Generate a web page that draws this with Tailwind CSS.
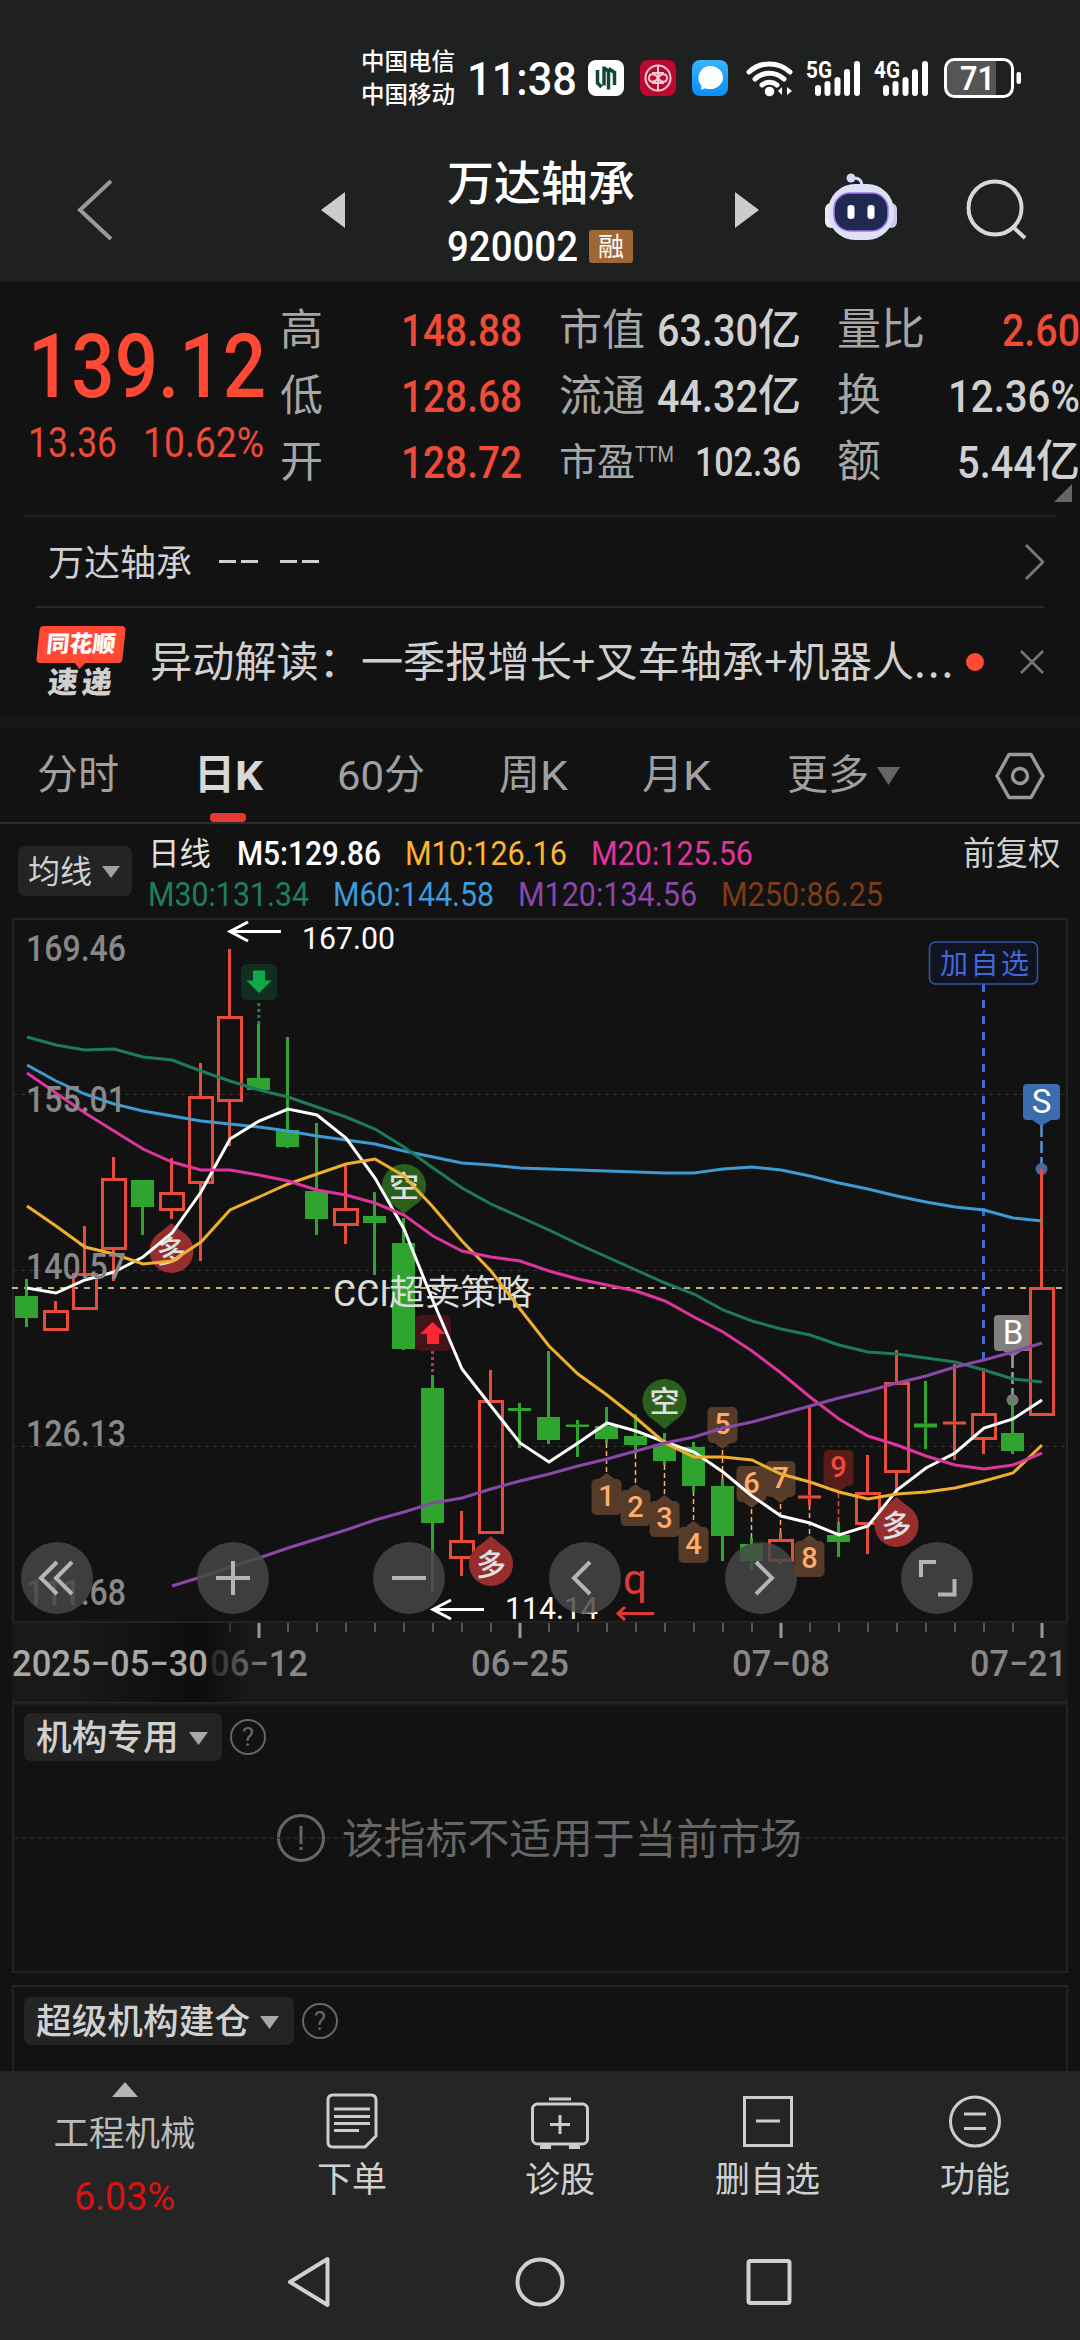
<!DOCTYPE html>
<html lang="zh-CN">
<head>
    <meta charset="UTF-8">
    <meta name="viewport" content="width=device-width, initial-scale=1.0">
    <title>万达轴承 920002</title>
    <script src="https://cdn.jsdelivr.net/npm/@tailwindcss/browser@4"></script>
</head>
<body class="w-[1080px] h-[2340px] overflow-hidden bg-[#121212] text-[#d0d0d0] font-['Roboto','Noto_Sans_CJK_SC',sans-serif] leading-none whitespace-nowrap">

    <!-- Header -->
    <header class="h-[282px] bg-[#1f2120]">
        <!-- Status bar -->
        <div class="h-[156px] flex items-center pl-[361px] text-white">
            <div class="w-[106px] text-[23.5px] font-medium flex flex-col gap-[10px] pt-[2px]">
                <span>中国电信</span>
                <span>中国移动</span>
            </div>
            <span data-w="110" class="text-[47px] font-medium">11:38</span>
            <svg class="ml-[11px]" width="36" height="36" viewBox="0 0 36 36">
                <rect width="36" height="36" rx="8" fill="#fff"/>
                <path d="M9.500 10v13l4 4M16 6.500v19M20.500 9.500v20M20.500 8.500l6 4V25M16 8l4.500 3" fill="none" stroke="#12482f" stroke-width="3.500"/>
            </svg>
            <svg class="ml-4" width="36" height="36" viewBox="0 0 36 36">
                <rect width="36" height="36" rx="8" fill="#bd0831"/>
                <g fill="none" stroke="#f3cdd5" stroke-width="2"><circle cx="18" cy="18" r="12.5"/><path d="M18 5v26M18 18c-3-5-9-5-9 0s6 5 9 0 9-5 9 0-6 5-9 0M12 13h12M12 23h12"/></g>
            </svg>
            <svg class="ml-4" width="36" height="36" viewBox="0 0 36 36">
                <defs><linearGradient id="msg" x2="0" y2="1"><stop stop-color="#38b4fb"/><stop offset="1" stop-color="#0a8df8"/></linearGradient></defs>
                <rect width="36" height="36" rx="8" fill="url(#msg)"/>
                <path d="M18 6a13 11.5 0 0 1 0 23c-2 0-3 0-5-.8L9 30l.6-4A12 12 0 0 1 18 6z" fill="#fff"/>
            </svg>
            <svg class="ml-[18px]" width="48" height="38" viewBox="0 0 48 38">
                <g fill="none" stroke="#fff" stroke-width="5" stroke-linecap="round"><path d="M3 13a30 30 0 0 1 41 0M9 20a21 21 0 0 1 29 0M16 26a12 12 0 0 1 15 0"/></g>
                <circle cx="23.500" cy="32.500" r="4.800" fill="#fff"/>
                <path d="M36 28v8l-4-4zM41 28v8l5-4z" fill="#fff"/>
            </svg>
            <svg class="ml-[12px]" width="56" height="38" viewBox="0 0 56 38">
                <text x="0" y="19" font-size="24" font-weight="700" fill="#fff" textLength="26" lengthAdjust="spacingAndGlyphs">5G</text>
                <g stroke="#fff" stroke-width="6" stroke-linecap="round"><path d="M12 29v5M21.500 25v9M31.500 21v13M41 13v21M51 5v29"/></g>
            </svg>
            <svg class="ml-[12px]" width="56" height="38" viewBox="0 0 56 38">
                <text x="0" y="19" font-size="24" font-weight="700" fill="#fff" textLength="26" lengthAdjust="spacingAndGlyphs">4G</text>
                <g stroke="#fff" stroke-width="6" stroke-linecap="round"><path d="M12 29v5M21.500 25v9M31.500 21v13M41 13v21M51 5v29"/></g>
            </svg>
            <svg class="ml-[12px]" width="80" height="42" viewBox="0 0 80 42">
                <path d="M12 4h42v34H12q-8 0-8-8V12q0-8 8-8z" fill="#555"/>
                <rect x="3.500" y="2.500" width="67" height="37" rx="9" fill="none" stroke="#fff" stroke-width="3"/>
                <rect x="74.500" y="15" width="4.500" height="12" rx="2" fill="#fff"/>
                <text x="18" y="33" font-size="34" font-weight="600" fill="#fff" textLength="35" lengthAdjust="spacingAndGlyphs">71</text>
            </svg>
        </div>
        <!-- Stock title -->
        <div class="h-[108px] flex items-center pl-[74px]">
            <svg width="42" height="64" viewBox="0 0 42 64"><path d="M37 3L6 32l31 29" fill="none" stroke="#999" stroke-width="4"/></svg>
            <svg class="ml-[205px]" width="24" height="36" viewBox="0 0 24 36"><path d="M24 0v36L0 18z" fill="#ccc"/></svg>
            <div class="ml-[102px] w-[186px] self-start text-white">
                <div class="h-[52px] flex items-center text-[47px] font-medium pt-[2px]">万达轴承</div>
                <div class="h-[76px] flex items-center justify-between">
                    <span data-w="131" class="text-[42px] font-medium">920002</span>
                    <span class="w-[44px] h-[33px] rounded-[3px] bg-[#a06634] flex items-center justify-center text-[26px] pt-[2px]">融</span>
                </div>
            </div>
            <svg class="ml-[102px]" width="24" height="36" viewBox="0 0 24 36"><path d="M0 0v36l24-18z" fill="#ccc"/></svg>
            <svg class="ml-[65px] -mt-1.5" width="74" height="68" viewBox="0 0 74 68">
                <path d="M27 6q11-3 11 8" fill="none" stroke="#dcdcf4" stroke-width="3"/>
                <circle cx="27" cy="5" r="4.500" fill="#d6d6f5"/>
                <rect x="1" y="30" width="12" height="25" rx="6" fill="#e9e9fb"/>
                <rect x="61" y="30" width="12" height="25" rx="6" fill="#c9c9f0"/>
                <rect x="4" y="11" width="66" height="56" rx="27" fill="#dfdff5"/>
                <rect x="10" y="20" width="54" height="38" rx="16" fill="#202950" stroke="#9c7bf0" stroke-width="1.500"/>
                <rect x="23.500" y="32" width="7" height="14" rx="3" fill="#fff"/>
                <rect x="43.500" y="32" width="7" height="14" rx="3" fill="#fff"/>
            </svg>
            <svg class="ml-[67px]" width="64" height="64" viewBox="0 0 64 64"><g fill="none" stroke="#d8d8d8" stroke-width="4"><circle cx="30" cy="30" r="26.500"/><path d="M48 49l12 11"/></g></svg>
        </div>
    </header>

    <!-- Quote -->
    <section class="relative mx-6 h-[235px] pt-[15px] border-b-2 border-[#232323] flex text-[43px] text-[#a6a6a6]">
        <div class="w-[256px] shrink-0 pl-1 text-[#ff4935]">
            <div class="h-[136px] flex items-center"><span data-w="238" class="text-[89px] font-medium">139.12</span></div>
            <div class="h-[18px] flex items-center justify-between pr-[16px] text-[42px] text-[#f04a38]"><span data-w="89">13.36</span><span data-w="121">10.62%</span></div>
        </div>
        <div class="w-[242px] shrink-0 h-[198px] grid grid-rows-3 items-center">
            <div class="flex justify-between items-center">高<span data-w="121" class="text-[44px] font-medium text-[#f04a38]">148.88</span></div>
            <div class="flex justify-between items-center">低<span data-w="121" class="text-[44px] font-medium text-[#f04a38]">128.68</span></div>
            <div class="flex justify-between items-center">开<span data-w="121" class="text-[44px] font-medium text-[#f04a38]">128.72</span></div>
        </div>
        <div class="ml-[37px] w-[242px] shrink-0 h-[198px] grid grid-rows-3 items-center">
            <div class="flex justify-between items-center">市值<span class="text-[#d0d0d0] font-medium flex items-center"><span data-w="101" class="text-[44px]">63.30</span>亿</span></div>
            <div class="flex justify-between items-center">流通<span class="text-[#d0d0d0] font-medium flex items-center"><span data-w="101" class="text-[44px]">44.32</span>亿</span></div>
            <div class="flex items-center text-[38px]">市盈<span data-w="39" class="text-[22px] mb-4">TTM</span><span data-w="106" class="ml-auto text-[40px] font-medium text-[#d0d0d0]">102.36</span></div>
        </div>
        <div class="ml-[36px] w-[243px] shrink-0 h-[198px] grid grid-rows-3 items-center text-[44px]">
            <div class="flex justify-between items-center">量比<span data-w="78" class="font-medium text-[#f04a38]">2.60</span></div>
            <div class="flex justify-between items-center">换<span data-w="132" class="font-medium text-[#d0d0d0]">12.36%</span></div>
            <div class="flex justify-between items-center">额<span class="text-[#d0d0d0] font-medium flex items-center"><span data-w="79">5.44</span>亿</span></div>
        </div>
        <svg class="absolute left-[1030px] top-[202px]" width="18" height="18" viewBox="0 0 18 18"><path d="M18 0v18H0z" fill="#666"/></svg>
    </section>

    <!-- Name row -->
    <section class="mx-9 h-[91px] border-b-2 border-[#2a2a2a] flex items-center">
        <span class="ml-[12px] pt-[4px] text-[36px]">万达轴承</span>
        <div class="ml-[27px] flex gap-[5px]">
            <i class="w-[17px] h-[3px] bg-[#d0d0d0]"></i><i class="w-[17px] h-[3px] bg-[#d0d0d0]"></i>
            <i class="ml-[17px] w-[17px] h-[3px] bg-[#d0d0d0]"></i><i class="w-[17px] h-[3px] bg-[#d0d0d0]"></i>
        </div>
        <svg class="ml-auto" width="20" height="38" viewBox="0 0 20 38"><path d="M2 2l17 17L2 36" fill="none" stroke="#777" stroke-width="3"/></svg>
    </section>

    <!-- News row -->
    <section class="mx-9 h-[107px] flex items-center">
        <div class="w-[90px]">
            <div class="relative w-[86px] h-[37px] ml-[2px] rounded-[4px] -skew-x-6 bg-[#ff4935] flex items-center justify-center text-[23px] font-black text-white">同花顺
                <svg class="absolute left-[38px] top-[36px]" width="12" height="7" viewBox="0 0 12 7"><path d="M0 0h12L6 7z" fill="#ff4935"/></svg>
            </div>
            <div class="mt-[5px] pl-[12px] flex gap-[4px] text-[30px] font-black -skew-x-6"><span>速</span><span>递</span></div>
        </div>
        <span class="ml-[24px] mb-[5px] text-[42.2px] font-['Noto_Sans_CJK_SC',sans-serif]">异动解读：一季报增长+叉车轴承+机器人<span class="tracking-[2px]">...</span></span>
        <i class="ml-auto size-[18px] rounded-full bg-[#ff4935]"></i>
        <svg class="ml-[36px]" width="24" height="24" viewBox="0 0 24 24"><path d="M1 1l22 22M23 1L1 23" fill="none" stroke="#777" stroke-width="2.500"/></svg>
    </section>

    <div class="h-3 bg-[#171717]"></div>

    <!-- Period tabs -->
    <nav class="h-[97px] border-b-2 border-[#2c2c2c] pl-[37px] pt-[2px] flex items-center text-[41px] text-[#a0a0a0]">
        <span class="w-[157px]">分时</span>
        <span class="relative w-[143px] font-bold text-[#d8d8d8] flex items-center">日<span data-w="28">K</span>
            <i class="absolute left-[16px] top-[58px] w-[36px] h-[9px] rounded-[4px] bg-[#e53935]"></i>
        </span>
        <span class="w-[162px] flex items-center"><span data-w="47">60</span>分</span>
        <span class="w-[143px] flex items-center">周<span data-w="28">K</span></span>
        <span class="w-[145px] flex items-center">月<span data-w="28">K</span></span>
        <span>更多</span>
        <svg class="ml-[8px]" width="23" height="18" viewBox="0 0 23 18"><path d="M0 0h23L11.500 18z" fill="#666"/></svg>
        <svg class="ml-[95px]" width="50" height="48" viewBox="0 0 50 48"><g fill="none" stroke="#999" stroke-width="3.500" stroke-linejoin="round"><path d="M14 2.500h22L48 24 36 45.500H14L2 24z"/><circle cx="25" cy="24" r="7.500"/></g></svg>
    </nav>

    <!-- Moving averages -->
    <section class="h-[86px] pl-[18px] pt-[9px] flex">
        <div class="mt-[13px] w-[114px] h-[50px] rounded-[7px] bg-[#242424] flex items-center pl-[10px] pt-[2px] text-[32px]">均线<svg class="ml-[10px]" width="18" height="12" viewBox="0 0 18 12"><path d="M0 0h18L9 12z" fill="#a0a0a0"/></svg></div>
        <div class="ml-4 w-[815px] text-[33px]">
            <div class="h-[41px] flex items-center">
                <span class="w-[89px] pt-[2px] text-[31.5px] text-[#e0e0e0]">日线</span>
                <span data-w="144" class="font-medium text-white">M5:129.86</span>
                <span data-w="162" class="ml-6 text-[#fdb52b]">M10:126.16</span>
                <span data-w="162" class="ml-6 text-[#e0359f]">M20:125.56</span>
            </div>
            <div class="h-[41px] flex items-center">
                <span data-w="161" class="text-[#1d7f5f]">M30:131.34</span>
                <span data-w="161" class="ml-6 text-[#3c9bdc]">M60:144.58</span>
                <span data-w="179" class="ml-6 text-[#8b47ac]">M120:134.56</span>
                <span data-w="162" class="ml-6 text-[#7d3c14]">M250:86.25</span>
            </div>
        </div>
        <div class="h-[41px] flex items-center pt-[2px] text-[32.5px]">前复权</div>
    </section>

    <!-- K line chart -->
    <svg id="chart" class="block" width="1080" height="796" viewBox="0 910 1080 796">
        <defs>
            <linearGradient id="fade"><stop stop-color="#0e0e0e" stop-opacity="0"/><stop offset=".65" stop-color="#0e0e0e"/><stop offset=".75" stop-color="#0e0e0e"/><stop offset="1" stop-color="#0e0e0e" stop-opacity="0"/></linearGradient>
            <linearGradient id="dateFade" gradientUnits="userSpaceOnUse" x1="208" x2="270"><stop stop-color="#222"/><stop offset="1" stop-color="#888"/></linearGradient>
        </defs>
        <rect x="12" y="1622" width="1056" height="84" fill="#191919"/>
        <rect x="13" y="919" width="1054" height="703" fill="none" stroke="#232323" stroke-width="2"/>
        <path d="M12 1702.500h1056" stroke="#272727" stroke-width="2"/>
        <g stroke="#333" stroke-dasharray="4 4"><path d="M13 1094.500h1054M13 1270.500h1054M13 1446.500h1054"/></g>
        <path d="M12 1288h1050" stroke="#c9ae86" stroke-width="2" stroke-dasharray="6 6"/>
        <path d="M983.500 984V1372" stroke="#4169d9" stroke-width="3" stroke-dasharray="8 8"/>

        <!-- S / B points -->
        <g text-anchor="middle" font-size="33" fill="#fff">
            <rect x="1023" y="1084" width="37" height="36" rx="4" fill="#3a6cae"/>
            <path d="M1032 1120h19l-9.500 6z" fill="#3a6cae"/>
            <path d="M1041.500 1125v42" stroke="#5a92d0" stroke-width="2.500" stroke-dasharray="12 4"/>
            <circle cx="1041.500" cy="1169" r="6" fill="#45699f"/>
            <text x="1041.500" y="1113">S</text>
            <rect x="994" y="1315" width="37" height="36" rx="4" fill="#808080"/>
            <path d="M1003 1351h19l-9.500 6z" fill="#808080"/>
            <path d="M1012.500 1356v42" stroke="#a0a0a0" stroke-width="2.500" stroke-dasharray="12 4"/>
            <circle cx="1012.500" cy="1400" r="6" fill="#777"/>
            <text x="1013" y="1344">B</text>
        </g>

        <g id="candles"></g>
        <g id="marks"></g>

        <!-- buy / sell arrows -->
        <rect x="241" y="964" width="36" height="36" rx="6" fill="#10301f"/>
        <path d="M253 970.500h12v10h6.500L259 993l-12.500-12.500h6.500z" fill="#0fa84a"/>
        <path d="M258.800 1003v21" stroke="#178a45" stroke-width="3" stroke-dasharray="3 3"/>
        <rect x="415" y="1315" width="36" height="36" rx="6" fill="#451418"/>
        <path d="M427 1344h12v-10h6.500L432.500 1322l-12.500 12h7z" fill="#ff2636"/>
        <path d="M432.500 1351v22" stroke="#c72d3a" stroke-width="3" stroke-dasharray="3 3"/>

        <text x="333" y="1306" font-size="37" fill="#dcdcdc" textLength="56" lengthAdjust="spacingAndGlyphs">CCI</text>
        <text x="389" y="1305" font-size="35.700" fill="#dcdcdc">超卖策略</text>

        <g id="lines" fill="none" stroke-width="3"></g>

        <g font-size="36" font-weight="500" fill="#888">
            <text x="26" y="961" textLength="100" lengthAdjust="spacingAndGlyphs">169.46</text>
            <text x="26" y="1112" textLength="100" lengthAdjust="spacingAndGlyphs">155.01</text>
            <text x="26" y="1278.500" textLength="100" lengthAdjust="spacingAndGlyphs">140.57</text>
            <text x="26" y="1446" textLength="100" lengthAdjust="spacingAndGlyphs">126.13</text>
            <text x="26" y="1605" textLength="100" lengthAdjust="spacingAndGlyphs">111.68</text>
        </g>
        <g fill="none" stroke="#fff" stroke-width="3"><path d="M281 931.500h-50M248 922l-18 9.500 18 9.500M484 1609.500h-50M451 1600l-18 9.500 18 9.500"/></g>
        <text x="302" y="949" font-size="32" fill="#fff" textLength="93" lengthAdjust="spacingAndGlyphs">167.00</text>
        <text x="505" y="1619" font-size="32" fill="#fff" textLength="93" lengthAdjust="spacingAndGlyphs">114.14</text>
        <text x="623" y="1594" font-size="42" fill="#e03a38">q</text>
        <path d="M654 1613.500h-35M625 1607l-7 6.500 7 6.500" fill="none" stroke="#e03a38" stroke-width="3"/>
        <rect x="929.500" y="942" width="108" height="42" rx="6" fill="#0f1420" stroke="#3556a8" stroke-width="1.500"/>
        <text x="940" y="973.500" font-size="28" fill="#4169d9" textLength="89">加自选</text>

        <!-- round tool buttons -->
        <g fill="#484848" fill-opacity=".84"><circle cx="57" cy="1578" r="36"/><circle cx="233" cy="1578" r="36"/><circle cx="409" cy="1578" r="36"/><circle cx="585" cy="1578" r="36"/><circle cx="761" cy="1578" r="36"/><circle cx="937" cy="1578" r="36"/></g>
        <g fill="none" stroke="#b5b5b5" stroke-width="4"><path d="M57 1562l-16 16 16 16M72 1562l-16 16 16 16M216 1578h34M233 1561v34M392 1578h34M590 1562l-16 16 16 16M756 1562l16 16-16 16M936 1562h-15v15M938 1594.500h16.500V1579"/></g>

        <!-- time axis -->
        <g id="ticks"></g>
        <rect x="70" y="1623" width="180" height="79" fill="url(#fade)"/>
        <g font-size="36" font-weight="500" fill="#888">
            <text x="12" y="1676" fill="#a8a8a8" textLength="196" lengthAdjust="spacingAndGlyphs">2025−05−30</text>
            <text x="210" y="1676" fill="url(#dateFade)" textLength="98" lengthAdjust="spacingAndGlyphs">06−12</text>
            <text x="471" y="1676" textLength="98" lengthAdjust="spacingAndGlyphs">06−25</text>
            <text x="732" y="1676" textLength="98" lengthAdjust="spacingAndGlyphs">07−08</text>
            <text x="970" y="1676" textLength="97" lengthAdjust="spacingAndGlyphs">07−21</text>
        </g>
    </svg>

    <!-- Indicator panel 1 -->
    <section class="mx-3 h-[267px] border-x-2 border-b-2 border-[#232323] pt-[7px]">
        <div class="h-[48px] pl-[10px] flex items-center">
            <div class="w-[198px] h-[48px] rounded-[7px] bg-[#242424] flex items-center pl-3 pt-[3px] text-[35.7px] font-medium">机构专用<svg class="ml-[10px]" width="19" height="13" viewBox="0 0 19 13"><path d="M0 0h19L9.500 13z" fill="#a8a8a8"/></svg></div>
            <div class="ml-[8px] size-[36px] rounded-full border-[2.5px] border-[#666] flex items-center justify-center text-[26px] text-[#666]">?</div>
        </div>
        <div class="relative mt-[52px] h-[50px] flex items-center pl-[263px] text-[41.8px] text-[#666]">
            <svg class="absolute left-0 top-[24px]" width="1052" height="2" viewBox="0 0 1052 2"><path d="M0 1h1052" stroke="#272727" stroke-width="1.500" stroke-dasharray="4 4"/></svg>
            <svg class="mr-[17px]" width="48" height="48" viewBox="0 0 48 48"><circle cx="24" cy="24" r="22.500" fill="none" stroke="#666" stroke-width="3"/><path d="M24 12v18M24 33v3" stroke="#666" stroke-width="3"/></svg>
            <span class="relative pt-[4px]">该指标不适用于当前市场</span>
        </div>
    </section>
    <!-- Indicator panel 2 -->
    <section class="mx-3 mt-3 h-[86px] border-x-2 border-t-2 border-[#232323] pt-[10px]">
        <div class="h-[48px] pl-[10px] flex items-center">
            <div class="w-[270px] h-[48px] rounded-[7px] bg-[#242424] flex items-center pl-3 pt-[3px] text-[35.7px] font-medium">超级机构建仓<svg class="ml-[10px]" width="19" height="13" viewBox="0 0 19 13"><path d="M0 0h19L9.500 13z" fill="#a8a8a8"/></svg></div>
            <div class="ml-[8px] size-[36px] rounded-full border-[2.5px] border-[#666] flex items-center justify-center text-[26px] text-[#666]">?</div>
        </div>
    </section>

    <!-- Bottom bar -->
    <footer class="h-[269px] bg-[#252525]">
        <div class="h-[140px] flex text-[35px]">
            <div class="w-[249px] pt-[11px] flex flex-col items-center text-[35.5px] text-[#bbb]">
                <svg class="shrink-0" width="26" height="15" viewBox="0 0 26 15"><path d="M13 0l13 15H0z" fill="#b5b5b5"/></svg>
                <span class="mt-[20px]">工程机械</span>
                <span data-w="101" class="mt-[24px] text-[38px] text-[#dd1210]">6.03%</span>
            </div>
            <div class="w-[206px] pt-[21px] flex flex-col items-center">
                <svg width="52" height="60" viewBox="0 0 52 60"><g fill="none" stroke="#ccc" stroke-width="3"><path d="M7 3h38q5 0 5 5v36L39 55H7q-5 0-5-5V8q0-5 5-5z"/><path d="M8 17h36M8 24.500h36M8 31.500h36M8 38.500h25"/></g></svg>
                <span class="mt-[11px]">下单</span>
            </div>
            <div class="w-[210px] pt-[21px] flex flex-col items-center">
                <svg width="60" height="60" viewBox="0 0 60 60"><g fill="none" stroke="#ccc" stroke-width="3"><rect x="2.500" y="12" width="55" height="40" rx="5"/><path d="M19 7h22M30 23v19M20 32.500h20"/><path d="M10 55h11M39 55h11" stroke-width="4"/></g></svg>
                <span class="mt-[11px]">诊股</span>
            </div>
            <div class="w-[205px] pt-[21px] flex flex-col items-center">
                <svg width="52" height="60" viewBox="0 0 52 60"><path d="M2.500 5.500h47v48h-47zM14 29h24" fill="none" stroke="#ccc" stroke-width="3"/></svg>
                <span class="mt-[11px]">删自选</span>
            </div>
            <div class="w-[210px] pt-[21px] flex flex-col items-center">
                <svg width="54" height="60" viewBox="0 0 54 60"><g fill="none" stroke="#ccc" stroke-width="3"><circle cx="27" cy="29.500" r="24.500"/><path d="M16 22h22M16 36.500h22"/></g></svg>
                <span class="mt-[11px]">功能</span>
            </div>
        </div>
        <!-- System navigation -->
        <div class="h-[142px] flex items-center pl-[284px]">
            <svg width="50" height="56" viewBox="0 0 50 56"><path d="M43.500 5v46L6 28z" fill="none" stroke="#d0d0d0" stroke-width="4" stroke-linejoin="round"/></svg>
            <svg class="ml-[180px]" width="52" height="52" viewBox="0 0 52 52"><circle cx="26" cy="26" r="22.500" fill="none" stroke="#d0d0d0" stroke-width="4"/></svg>
            <svg class="ml-[180px]" width="46" height="48" viewBox="0 0 46 48"><rect x="2.500" y="3" width="41" height="42" rx="2" fill="none" stroke="#d0d0d0" stroke-width="4"/></svg>
        </div>
    </footer>

    <script>
        // condense number runs to their column width
        document.querySelectorAll('[data-w]').forEach(el => {
            const w = el.dataset.w;
            el.innerHTML = `<svg width="${w}" height="1em" class="block shrink-0 overflow-visible"><text y=".855em" textLength="${w}" lengthAdjust="spacingAndGlyphs" fill="currentColor">${el.textContent}</text></svg>`;
        });

        const X = i => 26.5 + 29 * i;

        // [up, high, top, bottom, low]
        const candles = [
            [0, 1279, 1296, 1318, 1327], [1, 1301, 1310, 1331, 1331], [1, 1226, 1273, 1310, 1310], [1, 1157, 1178, 1250, 1281],
            [0, 1180, 1180, 1207, 1235], [1, 1158, 1192, 1211, 1219], [1, 1063, 1096, 1184, 1261], [1, 949, 1016, 1102, 1146],
            [0, 1024, 1078, 1090, 1090], [0, 1037, 1130, 1147, 1148], [0, 1123, 1191, 1219, 1235], [1, 1165, 1208, 1226, 1244],
            [0, 1192, 1216, 1223, 1275], [0, 1218, 1243, 1349, 1350], [0, 1375, 1388, 1523, 1592], [1, 1511, 1540, 1559, 1576],
            [1, 1370, 1400, 1534, 1534], [0, 1403, 1408, 1411, 1448], [0, 1351, 1417, 1440, 1444], [0, 1420, 1424.5, 1427, 1457],
            [0, 1407, 1426, 1439, 1443], [0, 1414, 1436, 1445, 1454], [0, 1433, 1444, 1461, 1465], [0, 1442, 1447, 1486, 1491],
            [0, 1479, 1486, 1536, 1561], [0, 1538, 1544, 1561, 1570], [1, 1533, 1539, 1562, 1564], [1, 1407, 1495.5, 1498.5, 1505],
            [0, 1522, 1535, 1542, 1557], [1, 1455, 1492, 1525, 1554], [1, 1350, 1382, 1473, 1495], [0, 1381, 1423.5, 1427.5, 1449],
            [1, 1364, 1421.5, 1424.5, 1460], [1, 1372, 1413, 1440, 1454], [0, 1400, 1433, 1451, 1454], [1, 1169, 1287, 1416, 1416]
        ];
        document.getElementById('candles').innerHTML = candles.map(([up, h, t, b, l], i) => {
            const x = X(i);
            const color = up ? '#e84c3b' : '#2fa52f';
            const wick = `<path d="M${x} ${h}V${t}M${x} ${b}V${l}" stroke="${color}" stroke-width="3"/>`;
            const body = up && b - t > 4
                ? `<rect x="${x - 11}" y="${t + 1.5}" width="23" height="${b - t - 3}" fill="none" stroke="${color}" stroke-width="3"/>`
                : `<rect x="${x - 11.5}" y="${t}" width="23" height="${b - t}" fill="${color}"/>`;
            return wick + body;
        }).join('');

        // moving averages
        const lines = [
            ['#3c9bd3', 0, [1065, 1081, 1094, 1104, 1111, 1116, 1121, 1124, 1127, 1131, 1136, 1140, 1144, 1151, 1157, 1163, 1165, 1168, 1169, 1170, 1171, 1172, 1173, 1173, 1169, 1167, 1170, 1176, 1183, 1189, 1196, 1202, 1207, 1210, 1218, 1221]],
            ['#1d7a5c', 0, [1037, 1045, 1050, 1049, 1057, 1060, 1071, 1081, 1090, 1097, 1107, 1117, 1129, 1147, 1168, 1188, 1204, 1217, 1230, 1244, 1257, 1270, 1283, 1294, 1310, 1321, 1329, 1335, 1345, 1352, 1354, 1358, 1362, 1370, 1379, 1382]],
            ['#fff', 0, [1288, 1293, 1280, 1272, 1257, 1233, 1192, 1139, 1121, 1109, 1115, 1138, 1178, 1229, 1301, 1369, 1406, 1443, 1462, 1443, 1423, 1431, 1442, 1452, 1472, 1496, 1516, 1523, 1535, 1526, 1490, 1468, 1453, 1428, 1419, 1400]],
            ['#f0ae2e', 0, [1206, 1226, 1247, 1254, 1264, 1261, 1242, 1210, 1197, 1184, 1174, 1164, 1159, 1176, 1207, 1241, 1271, 1309, 1346, 1374, 1395, 1418, 1443, 1457, 1457, 1460, 1474, 1482, 1492, 1499, 1494, 1492, 1488, 1481, 1473, 1445]],
            ['#dc359c', 0, [1073, 1093, 1113, 1131, 1149, 1162, 1170, 1170, 1175, 1181, 1190, 1195, 1203, 1215, 1236, 1251, 1257, 1261, 1271, 1279, 1285, 1291, 1301, 1317, 1332, 1351, 1373, 1397, 1419, 1436, 1445, 1456, 1465, 1469, 1465, 1453]],
            ['#8848a8', 5, [1586, 1577, 1567, 1558, 1548, 1539, 1530, 1520, 1512, 1503, 1498, 1489, 1481, 1474, 1466, 1459, 1451, 1443, 1437, 1428, 1422, 1414, 1406, 1398, 1391, 1383, 1376, 1367, 1360, 1352, 1343]]
        ];
        document.getElementById('lines').innerHTML = lines.map(([color, start, ys]) =>
            `<polyline stroke="${color}" points="${ys.map((y, i) => (X(start + i) + 0.5) + ',' + y).join(' ')}"/>`
        ).join('');

        // nine-turn numbers: [label, column, box top, line end]
        const turns = [
            ['1', 20, 1479, 1443], ['2', 21, 1490, 1454], ['3', 22, 1501, 1465], ['4', 23, 1527, 1491], ['8', 27, 1541, 1505],
            ['5', 24, 1407, 1479], ['6', 25, 1466, 1538], ['7', 26, 1461, 1533], ['9', 28, 1450, 1522]
        ];
        let marks = turns.map(([label, col, top, end]) => {
            const x = X(col);
            const [fill, ink] = label === '9' ? ['#5c1e1a', '#f04a38'] : ['#5b3f2a', '#ffab6b'];
            const below = end < top;
            const tip = below ? `M${x - 8} ${top}h16l-8 -6z` : `M${x - 8} ${top + 36}h16l-8 6z`;
            return `<path d="M${x} ${end}V${below ? top - 6 : top + 42}" stroke="${ink}" stroke-width="1.5" stroke-dasharray="5 3"/>
                <rect x="${x - 15}" y="${top}" width="30" height="36" rx="5" fill="${fill}" fill-opacity=".95"/><path d="${tip}" fill="${fill}"/>
                <text x="${x}" y="${top + 27}" font-size="29" font-weight="500" text-anchor="middle" fill="${ink}">${label}</text>`;
        }).join('');

        // long / short balloons: [label, x, y]
        [['多', 171.5, 1251], ['多', 491, 1564], ['多', 896.5, 1525], ['空', 404, 1186], ['空', 664.5, 1401]].forEach(([label, x, y]) => {
            const long = label === '多';
            const fill = long ? '#962e2e' : '#2b5f1c';
            const tip = long ? `M${x - 12} ${y - 18}L${x} ${y - 28}L${x + 12} ${y - 18}z` : `M${x - 12} ${y + 18}L${x} ${y + 28}L${x + 12} ${y + 18}z`;
            marks += `<path d="${tip}" fill="${fill}"/><circle cx="${x}" cy="${y}" r="22" fill="${fill}"/>
                <text x="${x}" y="${y + 11}" font-size="30" font-weight="500" text-anchor="middle" fill="#e0e0e0">${label}</text>`;
        });
        document.getElementById('marks').innerHTML = marks;

        let ticks = '';
        for (let i = 7; i < 36; i++) {
            const major = (i - 8) % 9 === 0;
            ticks += `<path d="M${X(i) + 0.5} 1623V${major ? 1638 : 1632}" stroke="${major ? '#999' : '#555'}" stroke-width="${major ? 3 : 2}"/>`;
        }
        document.getElementById('ticks').innerHTML = ticks;
    </script>
</body>
</html>
